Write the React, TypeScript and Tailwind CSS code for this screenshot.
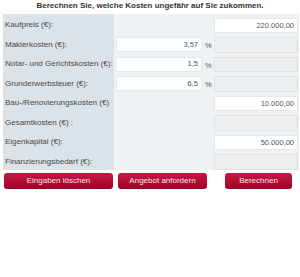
const rows = [
  { label: 'Kaufpreis (€):', pct: null, value: '220.000,00', editable: true },
  { label: 'Maklerkosten (€):', pct: '3,57', value: '', editable: false },
  { label: 'Notar- und Gerichtskosten (€):', pct: '1,5', value: '', editable: false },
  { label: 'Grunderwerbsteuer (€):', pct: '6,5', value: '', editable: false },
  { label: 'Bau-/Renovierungskosten (€)', pct: null, value: '10.000,00', editable: true },
  { label: 'Gesamtkosten (€) :', pct: null, value: '', editable: false },
  { label: 'Eigenkapital (€):', pct: null, value: '50.000,00', editable: true },
  { label: 'Finanzierungsbedarf (€):', pct: null, value: '', editable: false },
];

const Button = ({ children, className }: { children: string; className: string }) => (
  <button
    className={`h-[16px] rounded-[3px] bg-gradient-to-b from-[#c51a45] to-[#9c0026] text-[8px] leading-none text-[#f7e6ea] ${className}`}
  >
    {children}
  </button>
);

export default function App() {
  return (
    <div className="h-[277px] w-[300px] bg-white font-['Liberation_Sans',Arial,sans-serif]">
      <h1 className="h-[14px] pt-[1px] text-center text-[8px] font-bold leading-[10px] text-[#333]">
        Berechnen Sie, welche Kosten ungefähr auf Sie zukommen.
      </h1>
      <div className="ml-[3px] flex w-[296px] flex-col bg-[#eef2f5]">
        {rows.map((r, i) => (
          <div key={i} className="flex h-[19.5px]">
            <div className="flex w-[111px] items-center bg-[#dbe2e8] pl-[2px] pt-[3px] text-[8px] text-[#4a4a4a]">
              {r.label}
            </div>
            <div className="flex w-[100px] items-start pl-[2px] pt-[3.5px]">
              {r.pct !== null && (
                <>
                  <div className="flex h-[15px] w-[86px] items-center justify-end border border-[#e6e9ec] bg-white pr-[3px] text-[7.5px] text-[#555]">
                    {r.pct}
                  </div>
                  <span className="ml-[3px] mt-[3px] text-[7.5px] text-[#555]">%</span>
                </>
              )}
            </div>
            <div className="pt-[3.5px]">
              <div
                className={`flex h-[15.5px] w-[84px] items-center justify-end border pr-[3px] text-[7.5px] text-[#555] ${
                  r.editable ? 'border-[#e4e8eb] bg-white' : 'border-[#dfe2e5] bg-[#eeeeee]'
                }`}
              >
                {r.value}
              </div>
            </div>
          </div>
        ))}
      </div>
      <div className="mt-[3px] flex">
        <Button className="ml-[4px] w-[109px]">Eingaben löschen</Button>
        <Button className="ml-[5px] w-[89px]">Angebot anfordern</Button>
        <Button className="ml-[18px] w-[67px]">Berechnen</Button>
      </div>
    </div>
  );
}
